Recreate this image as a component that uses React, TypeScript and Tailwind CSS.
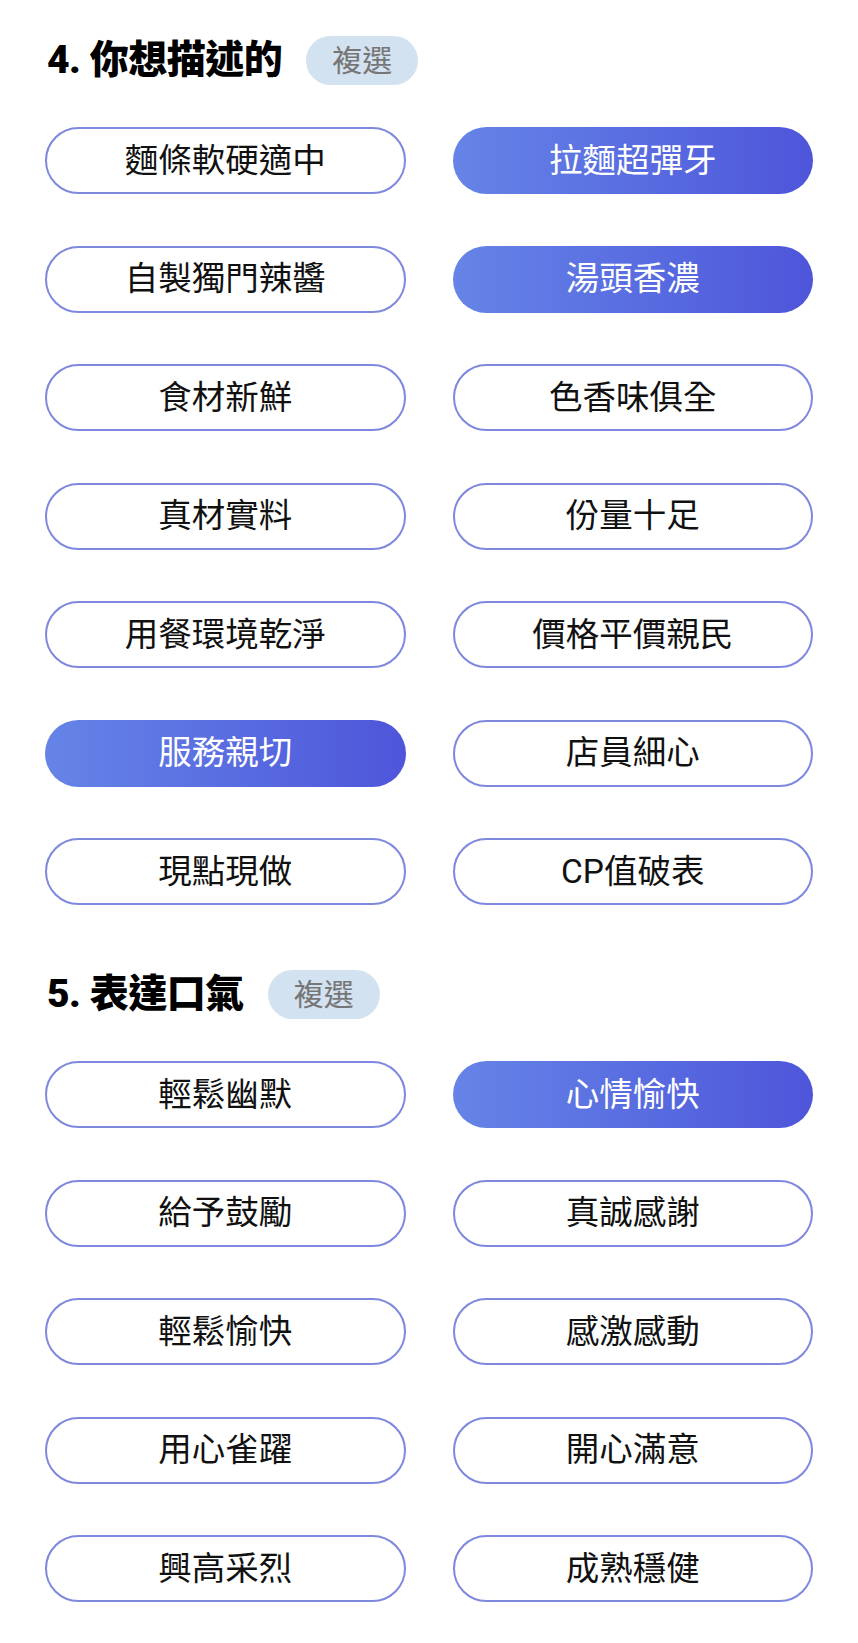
import { useState } from "react";

type Section = {
  no: number;
  title: string;
  options: string[];
  initial: string[];
};

const sections: Section[] = [
  {
    no: 4,
    title: "你想描述的",
    options: [
      "麵條軟硬適中",
      "拉麵超彈牙",
      "自製獨門辣醬",
      "湯頭香濃",
      "食材新鮮",
      "色香味俱全",
      "真材實料",
      "份量十足",
      "用餐環境乾淨",
      "價格平價親民",
      "服務親切",
      "店員細心",
      "現點現做",
      "CP值破表",
    ],
    initial: ["拉麵超彈牙", "湯頭香濃", "服務親切"],
  },
  {
    no: 5,
    title: "表達口氣",
    options: [
      "輕鬆幽默",
      "心情愉快",
      "給予鼓勵",
      "真誠感謝",
      "輕鬆愉快",
      "感激感動",
      "用心雀躍",
      "開心滿意",
      "興高采烈",
      "成熟穩健",
    ],
    initial: ["心情愉快"],
  },
];

const TagGroup = ({ section }: { section: Section }) => {
  const [selected, setSelected] = useState<string[]>(section.initial);

  const toggle = (opt: string) => {
    setSelected((prev) =>
      prev.includes(opt) ? prev.filter((o) => o !== opt) : [...prev, opt]
    );
  };

  return (
    <section>
      {/* Heading */}
      <div className="flex items-center h-[49px]">
        <h2 className="ml-[2px] text-[39px] font-black text-black leading-none tracking-[-0.5px]">
          {section.no}. {section.title}
        </h2>
        <span className="ml-[24px] flex items-center justify-center w-[112px] h-[49px] rounded-full bg-[#d3e2f0] text-[30px] text-[#767676] leading-none">
          複選
        </span>
      </div>

      {/* Options */}
      <div className="mt-[42px] grid grid-cols-2 gap-x-[47px] gap-y-[51.5px]">
        {section.options.map((opt) => {
          const active = selected.includes(opt);
          return (
            <button
              key={opt}
              onClick={() => toggle(opt)}
              className={`h-[67px] rounded-full flex items-center justify-center text-[33.5px] leading-none ${
                active
                  ? "bg-gradient-to-r from-[#6684e7] to-[#4e55da] text-white"
                  : "bg-white border-2 border-[#7e88de] text-[#111]"
              }`}
            >
              {opt}
            </button>
          );
        })}
      </div>
    </section>
  );
};

export default function App() {
  return (
    <div
      className="w-[858px] min-h-[1643px] bg-white px-[45px] pt-[36px] pb-[40px]"
      style={{ fontFamily: '"Roboto", "Noto Sans CJK TC", sans-serif' }}
    >
      <div className="flex flex-col gap-y-[65px]">
        {sections.map((s) => (
          <TagGroup key={s.no} section={s} />
        ))}
      </div>
    </div>
  );
}
